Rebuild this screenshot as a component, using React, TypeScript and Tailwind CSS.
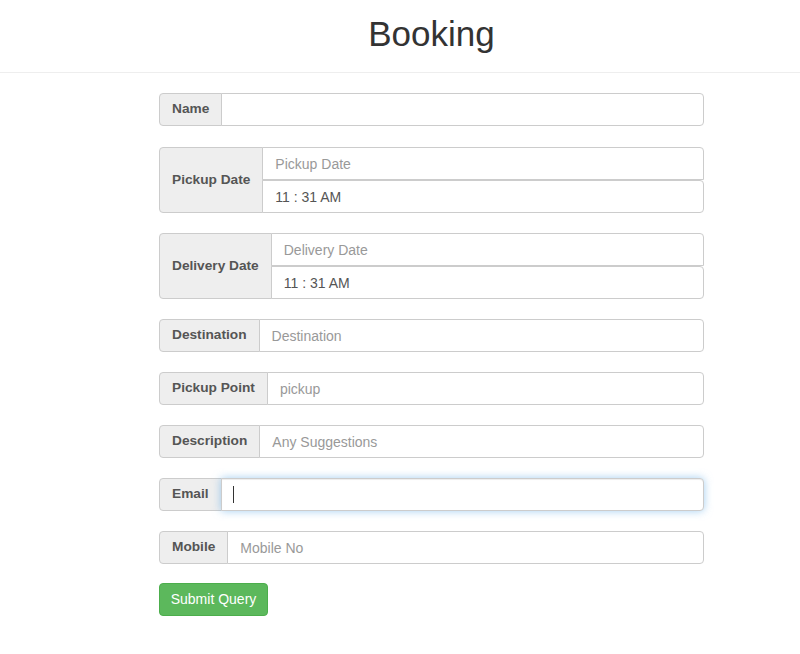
import React from 'react'

const font = { fontFamily: '"Liberation Sans", Arial, sans-serif' }

const addonCls =
  'flex items-center px-3 bg-[#eeeeee] border border-[#cccccc] rounded-l-[4px] text-[13.7px] font-bold text-[#555555] whitespace-nowrap'
const inputCls =
  'w-full h-[33px] px-3 bg-white border border-[#cccccc] text-[14px] text-[#555555] placeholder:text-[#999999] outline-none'

function Row({ label, placeholder, className = '' }: { label: string; placeholder?: string; className?: string }) {
  return (
    <div className={'flex h-[33px] ' + className}>
      <span className={addonCls}>{label}</span>
      <input className={inputCls + ' -ml-px rounded-r-[4px]'} placeholder={placeholder} />
    </div>
  )
}

function DateRow({ label, placeholder }: { label: string; placeholder: string }) {
  return (
    <div className="flex">
      <span className={addonCls}>{label}</span>
      <div className="flex flex-1 flex-col -ml-px">
        <input className={inputCls + ' rounded-tr-[4px]'} placeholder={placeholder} />
        <input className={inputCls + ' rounded-r-[4px]'} defaultValue="11 : 31 AM" />
      </div>
    </div>
  )
}

export default function App() {
  return (
    <div className="min-h-[654px] bg-white" style={font}>
      <header className="border-b border-[#eeeeee] h-[73px]">
        <div className="ml-[159px] w-[545px] pt-[14px]">
          <h1 className="text-center text-[35px] leading-[40px] font-medium text-[#333333]">Booking</h1>
        </div>
      </header>

      <form className="ml-[159px] w-[545px] mt-[20px] flex flex-col gap-[20px]">
        <Row label="Name" className="mb-px" />
        <DateRow label="Pickup Date" placeholder="Pickup Date" />
        <DateRow label="Delivery Date" placeholder="Delivery Date" />
        <Row label="Destination" placeholder="Destination" />
        <Row label="Pickup Point" placeholder="pickup" />
        <Row label="Description" placeholder="Any Suggestions" />

        <div className="flex h-[33px]">
          <span className={addonCls}>Email</span>
          <div className="relative flex-1 -ml-px">
            <input
              className={
                inputCls +
                ' rounded-r-[4px] border-[#66afe9] shadow-[inset_0_1px_1px_rgba(0,0,0,0.075),0_0_8px_rgba(102,175,233,0.6)]'
              }
            />
            <span className="absolute left-[12px] top-[8px] w-px h-[17px] bg-[#333333]" />
          </div>
        </div>

        <Row label="Mobile" placeholder="Mobile No" />

        <div className="-mt-px">
          <button
            type="button"
            className="h-[33px] w-[109px] rounded-[4px] bg-[#5cb85c] border border-[#4cae4c] text-white text-[14px]"
          >
            Submit Query
          </button>
        </div>
      </form>
    </div>
  )
}
